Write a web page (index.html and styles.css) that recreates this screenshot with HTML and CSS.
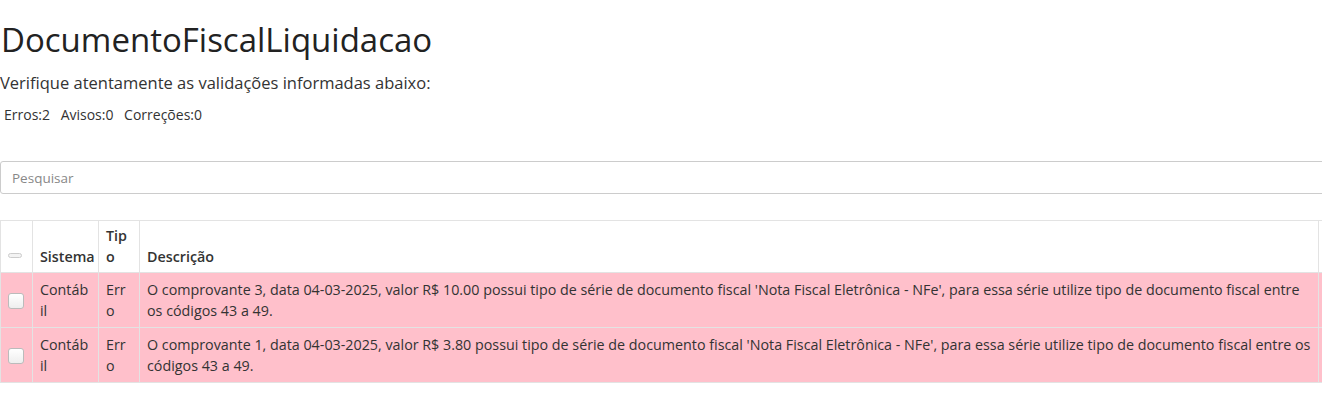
FILE: index.html
```html
<!DOCTYPE html>
<html>
<head>
    <title>Validações</title>
    <meta charset="UTF-8">
    <meta name="viewport" content="width=device-width, initial-scale=1.0">
    <link rel="stylesheet" href="styles.css">
</head>
<body>
    <div class="page">
        <h1 class="title">DocumentoFiscalLiquidacao</h1>
        <p class="subtitle">Verifique atentamente as validações informadas abaixo:</p>
        <div class="counters">
            <span>Erros:2</span>
            <span>Avisos:0</span>
            <span>Correções:0</span>
        </div>

        <input class="search" type="text" placeholder="Pesquisar">

        <table class="grid">
            <colgroup>
                <col class="col-check">
                <col class="col-sistema">
                <col class="col-tipo">
                <col class="col-desc">
                <col class="col-extra">
            </colgroup>
            <thead>
                <tr>
                    <th class="check-cell"><span class="check-all"></span></th>
                    <th class="nowrap">Sistema</th>
                    <th>Tipo</th>
                    <th>Descrição</th>
                    <th></th>
                </tr>
            </thead>
            <tbody>
                <tr class="row-error">
                    <td class="check-cell"><span class="checkbox"></span></td>
                    <td>Contábil</td>
                    <td>Erro</td>
                    <td class="desc">O comprovante 3, data 04-03-2025, valor R$ 10.00 possui tipo de série de documento fiscal 'Nota Fiscal Eletrônica - NFe', para essa série utilize tipo de documento fiscal entre os códigos 43 a 49.</td>
                    <td></td>
                </tr>
                <tr class="row-error">
                    <td class="check-cell"><span class="checkbox"></span></td>
                    <td>Contábil</td>
                    <td>Erro</td>
                    <td class="desc">O comprovante 1, data 04-03-2025, valor R$ 3.80 possui tipo de série de documento fiscal 'Nota Fiscal Eletrônica - NFe', para essa série utilize tipo de documento fiscal entre os códigos 43 a 49.</td>
                    <td></td>
                </tr>
            </tbody>
        </table>
    </div>
</body>
</html>
```

FILE: styles.css
```css
html, body {
    margin: 0;
    padding: 0;
    overflow: hidden;
}
body {
    font-family: 'Open Sans', sans-serif;
    color: #333;
    background-color: #fff;
}
.page {
    width: 1360px;
}
.title {
    font-size: 33px;
    font-weight: 400;
    line-height: 36px;
    margin: 22px 0 0 1px;
    color: #222;
}
.subtitle {
    font-size: 16.5px;
    margin: 13px 0 0 0;
    line-height: 24px;
}
.counters {
    font-size: 14px;
    margin: 10px 0 0 4px;
    line-height: 20px;
}
.counters span {
    margin-right: 7px;
}
.search {
    display: block;
    box-sizing: border-box;
    width: 1340px;
    height: 33px;
    margin-top: 36px;
    padding: 0 11px;
    border: 1px solid #ccc;
    border-radius: 3px;
    font-family: 'Open Sans', sans-serif;
    font-size: 13.5px;
    color: #333;
}
.search::placeholder {
    color: #888;
}
.grid {
    margin-top: 26px;
    border-collapse: collapse;
    table-layout: fixed;
    width: 1360px;
    font-size: 14.3px;
    line-height: 21px;
}
.col-check { width: 32px; }
.col-sistema { width: 66px; }
.col-tipo { width: 41px; }
.col-desc { width: 1179px; }
.grid th, .grid td {
    border: 1px solid #e3e3e3;
    padding: 6px 7px;
    text-align: left;
    word-break: break-all;
}
.grid td.desc {
    word-break: normal;
}
.grid th {
    font-weight: 600;
    vertical-align: bottom;
    padding: 4px 7px 5px;
}
.grid th.nowrap {
    white-space: nowrap;
}
.grid td {
    vertical-align: top;
}
.grid thead tr {
    background-color: #fff;
}
.row-error {
    background-color: pink;
}
.check-cell {
    text-align: center;
}
.grid td.check-cell {
    padding: 0 7px;
}
.checkbox {
    display: inline-block;
    box-sizing: border-box;
    width: 16px;
    height: 16px;
    margin-top: 20px;
    border: 1px solid #bbb;
    border-radius: 3px;
    background: linear-gradient(#fff, #eee);
    vertical-align: top;
}
.check-all {
    display: inline-block;
    box-sizing: border-box;
    width: 14px;
    height: 5px;
    border: 1px solid #ccc;
    border-radius: 3px;
    background-color: #f3f3f3;
    vertical-align: middle;
    margin-bottom: 6px;
}
```
